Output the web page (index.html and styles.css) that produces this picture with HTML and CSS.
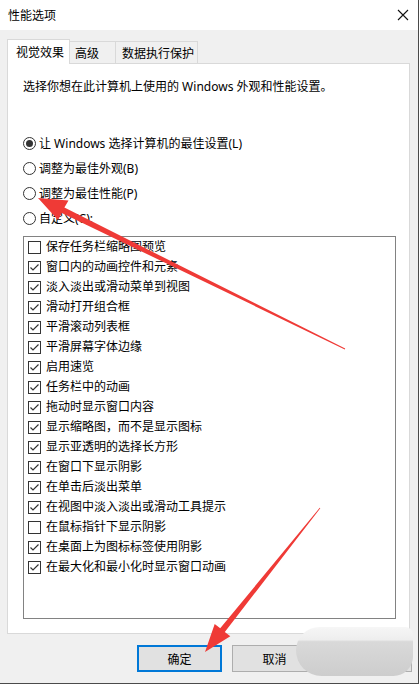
FILE: index.html
```html
<!DOCTYPE html>
<html lang="zh-CN">
<head>
<meta charset="utf-8">
<title>性能选项</title>
<link rel="stylesheet" href="styles.css">
</head>
<body>
<div class="window">
  <div class="titlebar">
    <span class="title">性能选项</span>
    <svg class="close" width="12" height="12" viewBox="0 0 12 12"><path d="M1 1 L11 11 M11 1 L1 11" stroke="#111" stroke-width="1.1" fill="none"/></svg>
  </div>
  <div class="tabs">
    <div class="tab active">视觉效果</div>
    <div class="tab">高级</div>
    <div class="tab">数据执行保护</div>
  </div>
  <div class="panel">
    <p class="desc">选择你想在此计算机上使用的 Windows 外观和性能设置。</p>
    <div class="radios">
      <div class="radio-row"><span class="radio on"></span><span>让 Windows 选择计算机的最佳设置(L)</span></div>
      <div class="radio-row"><span class="radio"></span><span>调整为最佳外观(B)</span></div>
      <div class="radio-row"><span class="radio"></span><span>调整为最佳性能(P)</span></div>
      <div class="radio-row"><span class="radio"></span><span>自定义(C):</span></div>
    </div>
    <div class="listbox">
      <div class="item"><span class="cb"></span><span>保存任务栏缩略图预览</span></div>
      <div class="item"><span class="cb checked"></span><span>窗口内的动画控件和元素</span></div>
      <div class="item"><span class="cb checked"></span><span>淡入淡出或滑动菜单到视图</span></div>
      <div class="item"><span class="cb checked"></span><span>滑动打开组合框</span></div>
      <div class="item"><span class="cb checked"></span><span>平滑滚动列表框</span></div>
      <div class="item"><span class="cb checked"></span><span>平滑屏幕字体边缘</span></div>
      <div class="item"><span class="cb checked"></span><span>启用速览</span></div>
      <div class="item"><span class="cb checked"></span><span>任务栏中的动画</span></div>
      <div class="item"><span class="cb checked"></span><span>拖动时显示窗口内容</span></div>
      <div class="item"><span class="cb checked"></span><span>显示缩略图，而不是显示图标</span></div>
      <div class="item"><span class="cb checked"></span><span>显示亚透明的选择长方形</span></div>
      <div class="item"><span class="cb checked"></span><span>在窗口下显示阴影</span></div>
      <div class="item"><span class="cb checked"></span><span>在单击后淡出菜单</span></div>
      <div class="item"><span class="cb checked"></span><span>在视图中淡入淡出或滑动工具提示</span></div>
      <div class="item"><span class="cb"></span><span>在鼠标指针下显示阴影</span></div>
      <div class="item"><span class="cb checked"></span><span>在桌面上为图标标签使用阴影</span></div>
      <div class="item"><span class="cb checked"></span><span>在最大化和最小化时显示窗口动画</span></div>
    </div>
  </div>
  <div class="buttons">
    <div class="btn default">确定</div>
    <div class="btn">取消</div>
    <div class="btn">应用(A)</div>
  </div>
  <div class="blur"></div>
  <svg class="arrows" width="419" height="684" viewBox="0 0 419 684">
    <polygon fill="#ef3a36" points="345.2,348.6 64.4,207.6 68.5,200.6 38,198 58.0,220.0 61.8,213.0 344.8,349.4"/>
    <polygon fill="#ef3a36" points="320.3,508.2 224.8,632.0 230.3,636.3 205,652 214.7,623.9 220.2,628.2 319.7,507.8"/>
  </svg>
</div>
</body>
</html>
```
FILE: styles.css
```css
* { box-sizing: border-box; }
html, body { margin: 0; padding: 0; }
body {
  width: 419px;
  height: 684px;
  overflow: hidden;
  font-family: "Segoe UI", "Noto Sans", "Noto Sans CJK SC", sans-serif;
  font-size: 12px;
  color: #000;
}
.window {
  position: relative;
  width: 419px;
  height: 684px;
  background: #f0f0f0;
  border-right: 1px solid #4a4a4a;
  border-bottom: 1px solid #4a4a4a;
}
.titlebar {
  height: 30px;
  background: #fff;
  display: flex;
  align-items: center;
  justify-content: space-between;
  padding: 0 9px 1px 8px;
}
.title { font-family: "Noto Sans CJK SC", sans-serif; line-height: 16px; }
.close { display: block; }
.tabs {
  display: flex;
  align-items: flex-end;
  margin: 9px 0 -1px 7px;
  height: 25px;
  position: relative;
  z-index: 2;
}
.tab {
  font-family: "Noto Sans CJK SC", sans-serif;
  height: 22px;
  margin-bottom: 1px;
  border: 1px solid #d9d9d9;
  border-bottom: none;
  background: #f0f0f0;
  padding: 0 5px;
  line-height: 21px;
  display: flex;
  align-items: center;
  white-space: nowrap;
  flex: none;
}
.tab + .tab { border-left: none; }
.tab:nth-child(2) { width: 46px; padding-left: 5px; }
.tab:nth-child(3) { width: 82px; padding-left: 6px; }
.tab.active {
  height: 25px;
  margin-bottom: 0;
  background: #fff;
  width: 63px;
  padding: 0 0 2px 8px;
}
.panel {
  margin: 0 8px 0 7px;
  height: 571px;
  background: #fff;
  border: 1px solid #d9d9d9;
  padding: 15px 0 0 15px;
  position: relative;
  z-index: 1;
}
.desc {
  margin: 0;
  line-height: 16px;
  height: 16px;
}
.radios { margin-top: 36px; }
.radio-row {
  height: 25px;
  display: flex;
  align-items: center;
  line-height: 16px;
}
.radio {
  width: 13px;
  height: 13px;
  border: 1px solid #333;
  border-radius: 50%;
  margin-right: 3px;
  flex: none;
  display: flex;
  align-items: center;
  justify-content: center;
}
.radio.on::after {
  content: "";
  width: 7px;
  height: 7px;
  border-radius: 50%;
  background: #333;
}
.listbox {
  margin-top: 5px;
  width: 373px;
  height: 383px;
  border: 1px solid #828282;
  padding: 0;
}
.item {
  height: 20px;
  display: flex;
  align-items: center;
  line-height: 16px;
  padding-left: 4px;
  white-space: nowrap;
}
.cb {
  width: 13px;
  height: 13px;
  border: 1px solid #333;
  background: #fff;
  margin-right: 5px;
  flex: none;
}
.cb.checked {
  background: #fff url("data:image/svg+xml,%3Csvg xmlns='http://www.w3.org/2000/svg' width='11' height='11' viewBox='0 0 11 11'%3E%3Cpath d='M1.5 5.5 L4 8 L9.5 2.5' stroke='%23333' stroke-width='1.2' fill='none'/%3E%3C/svg%3E") no-repeat center;
}
.buttons {
  display: flex;
  gap: 10px;
  padding-left: 137px;
  margin-top: 11px;
}
.btn {
  width: 85px;
  height: 27px;
  border: 1px solid #adadad;
  background: #e1e1e1;
  display: flex;
  align-items: center;
  justify-content: center;
  font-family: "Noto Sans CJK SC", sans-serif;
  line-height: 16px;
  flex: none;
}
.btn.default { border: 2px solid #0078d7; }
.blur {
  position: absolute;
  left: 296px;
  top: 627px;
  width: 117px;
  height: 49px;
  border-radius: 24px 8px 20px 26px;
  background: linear-gradient(180deg, #f6f6f6 0%, #eeeeee 26%, #d9d9d9 30%, #cdcdcd 100%);
  z-index: 3;
}
.arrows {
  position: absolute;
  left: 0;
  top: 0;
  z-index: 5;
  pointer-events: none;
}
```
